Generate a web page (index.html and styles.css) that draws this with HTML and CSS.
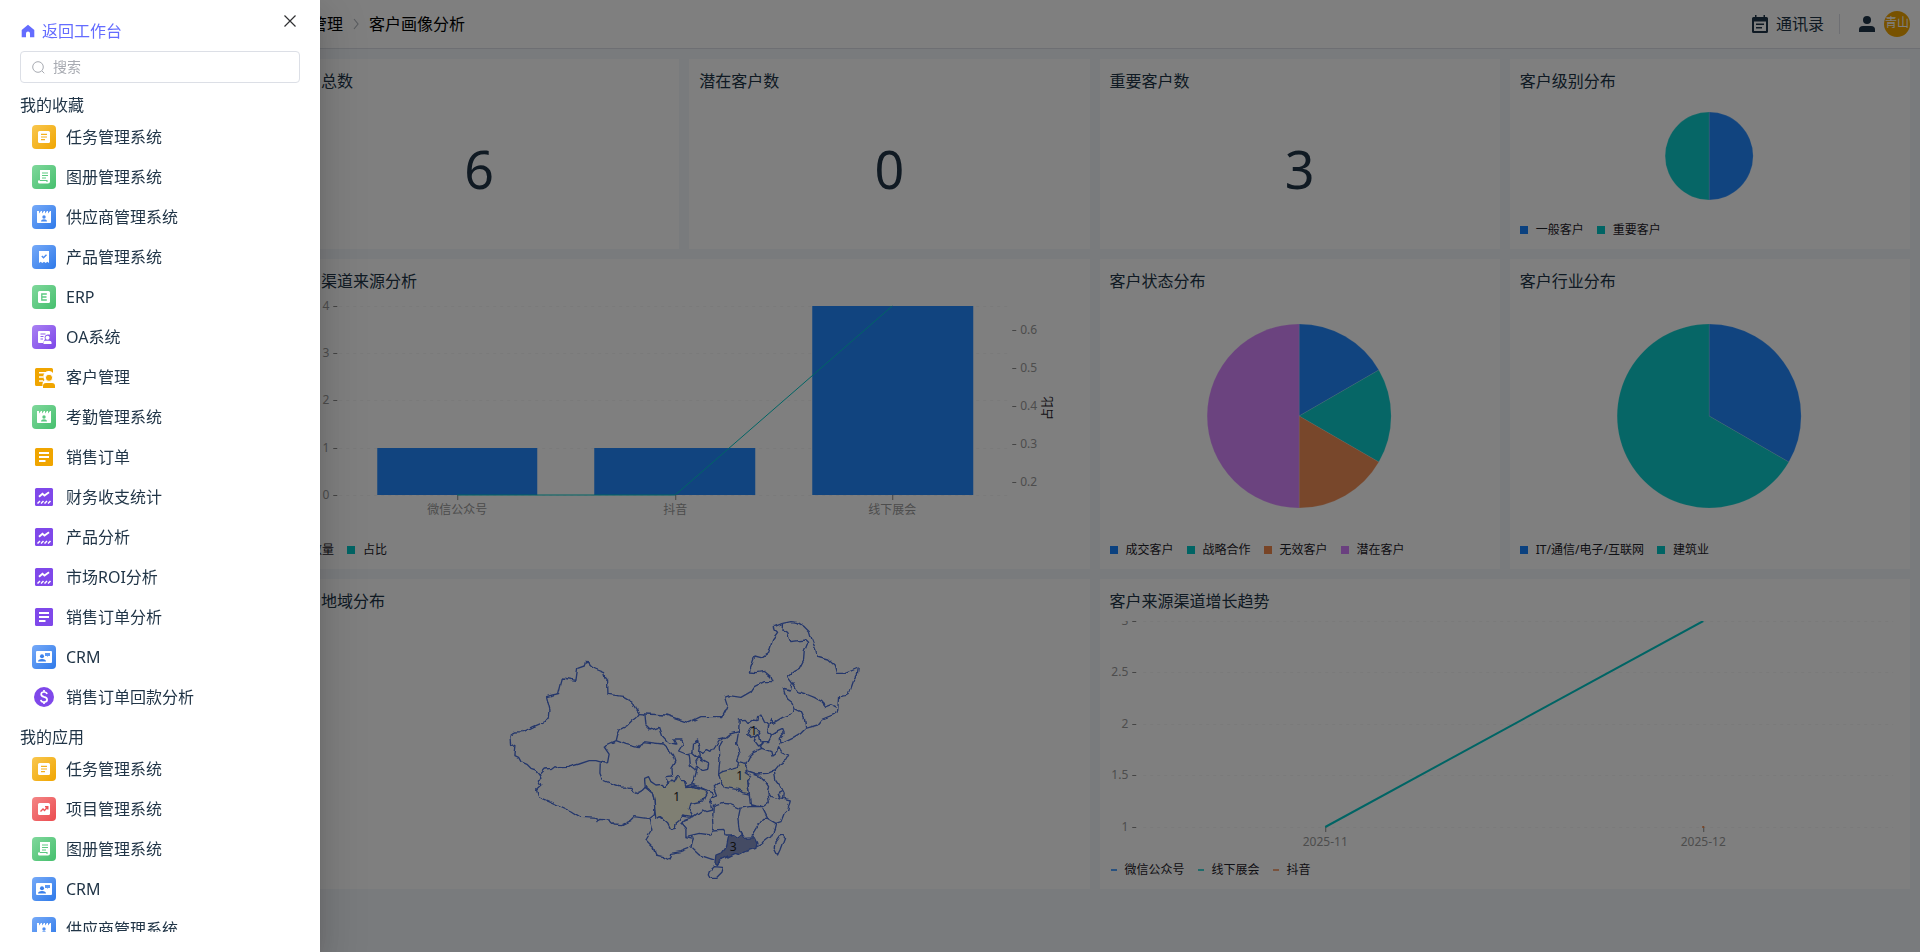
FILE: index.html
```html
<!DOCTYPE html>
<html lang="zh-CN">
<head>
<meta charset="utf-8">
<meta name="viewport" content="width=device-width, initial-scale=1">
<title>客户画像分析</title>
<link rel="stylesheet" href="styles.css">
</head>
<body>
<svg class="sprite" aria-hidden="true">
  <symbol id="i-task" viewBox="0 0 24 24"><rect x="6" y="6" width="12" height="12" rx="1.5" fill="#fff"/><path d="M9 9.3h6M9 12h6M9 14.7h4" stroke="#f3b021" stroke-width="1.2"/></symbol>
  <symbol id="i-album" viewBox="0 0 24 24"><path d="M8 5h10v11.5a2 2 0 0 1-2 2H7.500a1.500 1.500 0 0 1-1.500-1.500v-1.500h2z" fill="#fff"/><path d="M10 8h6M10 10.500h6M10 13h4M8 15.500h7v1.500" stroke="#5cc981" stroke-width="1.100" fill="none"/></symbol>
  <symbol id="i-badge" viewBox="0 0 24 24"><path d="M5 6h2v2.500L9 6h1v2.500L12 6h1v2.500L15 6h1v2.500L18 6h1v11.200a.8.8 0 0 1-.8.8H5.800a.8.8 0 0 1-.8-.8z" fill="#fff"/><circle class="cut" cx="12" cy="12" r="1.700"/><path class="cut" d="M9 16.500c0-3 6-3 6 0z"/></symbol>
  <symbol id="i-product" viewBox="0 0 24 24"><path d="M7 6h10v12l-1.700-1.300L13.700 18 12 16.700 10.300 18l-1.600-1.300L7 18z" fill="#fff"/><path d="m9.800 11 1.700 1.700 3-3" stroke="#4b8cf0" stroke-width="1.400" fill="none"/></symbol>
  <symbol id="i-erp" viewBox="0 0 24 24"><rect x="6" y="6" width="12" height="12" rx="1.500" fill="#fff"/><path d="M14.800 9H9.800v6h5M9.800 12h4.700" stroke="#5cc981" stroke-width="1.300" fill="none"/></symbol>
  <symbol id="i-oa" viewBox="0 0 24 24"><path d="M7 6h10a1 1 0 0 1 1 1v2.500h-2.500a3 3 0 0 0-2.500 4.500L11 18H7a1 1 0 0 1-1-1V7a1 1 0 0 1 1-1z" fill="#fff"/><path d="M8.500 9h5M8.500 11.500h3M8.500 14h2.500" stroke="#8f5eec" stroke-width="1.200"/><circle cx="15.500" cy="12.800" r="2" fill="#fff"/><path d="M11.500 19v-1.500q0-1.800 2-1.800h4q2 0 2 1.800V19z" fill="#fff"/></symbol>
  <symbol id="i-crm" viewBox="0 0 24 24"><rect x="4" y="6" width="16" height="12" rx="1" fill="#fff"/><circle cx="10" cy="11.200" r="2" fill="#3a80eb"/><path d="M6 16.500q0-2.500 4-2.500t4 2.500z" fill="#3a80eb"/><path d="M13 8h5v3h-2l-.5 1-.5-1h-2z" fill="#5c99f4"/></symbol>
  <symbol id="i-project" viewBox="0 0 24 24"><rect x="6" y="6" width="12" height="12" rx="1.500" fill="#fff"/><path d="m8.500 14.500 2.500-2.500 1.500 1.500 3-3.300M13 9.800h2.800v2.800" stroke="#ec5558" stroke-width="1.400" fill="none"/></symbol>
  <symbol id="i-customer" viewBox="0 0 24 24"><path d="M4.500 3h15a1.500 1.500 0 0 1 1.500 1.500V8a5 5 0 0 0-8.500 7q-2 1.300-2 3.800v2.200h-6A1.500 1.500 0 0 1 3 19.500v-15A1.500 1.500 0 0 1 4.500 3z" fill="#f0a500"/><path d="M7 7.800h9M7 12h4.500M7 16h4" stroke="#fff" stroke-width="1.500"/><circle cx="17" cy="12.800" r="3.600" fill="#f0a500" stroke="#fff" stroke-width="1"/><path d="M11 23v-2q0-3 3-3h6q3 0 3 3v2z" fill="#f0a500"/></symbol>
  <symbol id="i-order" viewBox="0 0 24 24"><rect x="3" y="3" width="18" height="18" rx="1.500" fill="currentColor"/><path d="M7 8h10M7 12h10M7 16h6.500" stroke="#fff" stroke-width="2"/></symbol>
  <symbol id="i-stat" viewBox="0 0 24 24"><rect x="3" y="3" width="18" height="18" rx="1.500" fill="currentColor"/><path d="m7 11.800 3.500-3 2 1.800L17 7.300" stroke="#fff" stroke-width="1.900" fill="none"/><path d="m5.500 18.500 2.500-2.500m1 2.500 2.500-2.500m1 2.500 2.500-2.500m1 2.500 2.500-2.500" stroke="#fff" stroke-width="1.500"/></symbol>
  <symbol id="i-money" viewBox="0 0 24 24"><circle cx="12" cy="12" r="10" fill="#7f48ea"/><path d="M15 9q-.4-2-3-2-2.800 0-2.800 2.300 0 1.900 2.800 2.600 3.100.7 3.100 2.800 0 2.300-3.100 2.300-2.800 0-3.200-2.200M12 5v2m0 10v2" stroke="#fff" stroke-width="1.700" fill="none"/></symbol>
</svg>

<div class="page">
  <header class="topbar">
    <nav class="crumbs" aria-label="面包屑">
      <a href="#">客户管理</a>
      <svg width="8" height="12" viewBox="0 0 8 12"><path d="m2 1 4 5-4 5" fill="none" stroke="#b4b8bf" stroke-width="1.200"/></svg>
      <span>客户画像分析</span>
    </nav>
    <div class="tools">
      <a class="contacts" href="#">
        <svg width="18" height="20" viewBox="0 0 18 20"><path d="M4 1h1.500v2h7V1H14v2h1.500A1.500 1.500 0 0 1 17 4.500v13a1.500 1.500 0 0 1-1.500 1.500h-13A1.500 1.500 0 0 1 1 17.500v-13A1.500 1.500 0 0 1 2.500 3H4z" fill="#1e3448"/><path d="M3 7.500h12V17H3z" fill="#fff"/><path d="M5 10.300h8M5 13.800h6" stroke="#1e3448" stroke-width="1.500"/></svg>
        通讯录
      </a>
      <span class="divider"></span>
      <button class="user" type="button" aria-label="用户"><svg width="16" height="16" viewBox="0 0 16 16"><circle cx="8" cy="4" r="4" fill="#1e3448"/><path d="M0 16v-2.500Q0 10 4 10h8q4 0 4 3.500V16z" fill="#1e3448"/></svg></button>
      <span class="avatar">青山</span>
    </div>
  </header>

  <main class="board">
    <section class="card"><h2>客户总数</h2><p class="stat">6</p></section>
    <section class="card"><h2>潜在客户数</h2><p class="stat">0</p></section>
    <section class="card"><h2>重要客户数</h2><p class="stat">3</p></section>
    <section class="card">
      <h2>客户级别分布</h2>
      <svg class="chart short" viewBox="0 0 380 110">
        <g class="pie"><path class="blue" d="M189 55V11a44 44 0 0 1 0 88z"/><path class="teal" d="M189 55v44a44 44 0 0 1 0-88z"/></g>
      </svg>
      <ul class="legend"><li class="blue">一般客户</li><li class="teal">重要客户</li></ul>
    </section>

    <section class="card wide">
      <h2>客户渠道来源分析</h2>
      <svg class="chart" viewBox="0 0 790 230">
        <path class="grid" d="M50 5.500h670M50 52.500h670M50 99.500h670M50 147.500h670M50 194.500h670"/>
        <path class="blue" d="M88 147h160v47H88zM305 147h161v47H305zM523 5h161v189H523z"/>
        <path class="tick" d="M44 5.500h4M44 52.500h4M44 99.500h4M44 147.500h4M44 194.500h4M723 29.500h4M723 67.500h4M723 105.500h4M723 143.500h4M723 181.500h4M168.500 194v5M386.500 194v5M603.500 194v5"/>
        <path class="line thin" d="M168 194H386L603 5"/>
        <g class="axis end"><text x="40" y="9">4</text><text x="40" y="56">3</text><text x="40" y="103">2</text><text x="40" y="151">1</text><text x="40" y="198">0</text></g>
        <g class="axis"><text x="731" y="33">0.6</text><text x="731" y="71">0.5</text><text x="731" y="109">0.4</text><text x="731" y="147">0.3</text><text x="731" y="185">0.2</text></g>
        <g class="axis mid"><text x="168" y="213">微信公众号</text><text x="386" y="213">抖音</text><text x="603" y="213">线下展会</text></g>
        <text class="name" transform="translate(763 107) rotate(-90)">占比</text>
      </svg>
      <ul class="legend inset"><li class="blue">数量</li><li class="teal">占比</li></ul>
    </section>
    <section class="card">
      <h2>客户状态分布</h2>
      <svg class="chart" viewBox="0 0 380 230">
        <g class="pie"><path class="blue" d="M189 115V23a92 92 0 0 1 79.700 46z"/><path class="teal" d="M189 115l79.700-46a92 92 0 0 1 0 92z"/><path class="orange" d="M189 115l79.700 46a92 92 0 0 1-79.700 46z"/><path class="purple" d="M189 115v92a92 92 0 0 1 0-184z"/></g>
      </svg>
      <ul class="legend"><li class="blue">成交客户</li><li class="teal">战略合作</li><li class="orange">无效客户</li><li class="purple">潜在客户</li></ul>
    </section>
    <section class="card">
      <h2>客户行业分布</h2>
      <svg class="chart" viewBox="0 0 380 230">
        <g class="pie"><path class="blue" d="M189 115V23a92 92 0 0 1 79.700 138z"/><path class="teal" d="M189 115l79.700 46A92 92 0 1 1 189 23z"/></g>
      </svg>
      <ul class="legend"><li class="blue">IT/通信/电子/互联网</li><li class="teal">建筑业</li></ul>
    </section>

    <section class="card wide">
      <h2>客户地域分布</h2>
      <svg class="chart map" viewBox="0 63 1170 774">
        <defs><filter id="coast" filterUnits="userSpaceOnUse" x="0" y="40" width="1170" height="820" color-interpolation-filters="sRGB"><feTurbulence type="fractalNoise" baseFrequency="0.045" numOctaves="1" seed="4"/><feDisplacementMap in="SourceGraphic" scale="16" xChannelSelector="R" yChannelSelector="G"/></filter></defs>
        <g class="borders" filter="url(#coast)">
          <path d="M288 184L300 185 302 196 315 207 343 218 347 232 355 240 356 283 403 289 430 305 440 325 450 341 443 350 430 360 412 378 393 388 385 405 381 422 345 438 360 460 355 488 345 489 320 482 300 482 270 492 235 502 213 503 200 497 190 505 165 507 150 523 140 510 125 505 113 493 95 485 88 472 77 467 80 440 64 433 62 408 78 396 100 395 130 380 165 365 170 358 180 352 182 330 177 310 172 290 190 285 208 281 213 260 220 234 260 241 265 205 285 198Z"/>
          <path d="M150 523L155 535 147 540 155 555 142 567 148 590 195 610 245 633 275 652 320 655 323 668 328 655 360 657 375 672 400 674 425 662 437 650 480 656 495 645 497 632 495 600 490 580 468 562 455 575 445 581 430 573 425 562 395 561 365 550 340 540 332 520 333 490"/>
          <path d="M381 422L410 433 447 443 460 425 485 428 520 432 540 450 553 465 560 485 548 505 550 528 527 530 537 553"/>
          <path d="M450 341L467 342 470 375 485 390 508 382 517 408 535 428 560 432 553 420 578 420 582 430 568 453 590 462 600 465 603 495 622 510 615 535 608 552 590 560"/>
          <path d="M467 342L530 345 597 368 635 350 700 350 715 320 706 292 720 287 755 292 785 275 795 260 825 245 851 245 845 230 825 214 800 218 780 216 797 168 815 173 838 158 850 120 865 100 857 92 855 80 880 70"/>
          <path d="M590 462L608 458 610 430 625 420 630 440 628 452 640 460 655 452 665 457 690 420 703 417 722 402 748 395"/>
          <path d="M608 458L622 470 640 480 658 490 655 508 640 512 625 498 620 485 630 470 628 452M622 510L625 498"/>
          <path d="M880 70L905 65 925 67 945 80 960 95 967 118 980 150 983 168 1015 177 1035 195 1042 220 1068 220 1107 204 1105 220 1092 245 1080 280 1068 287 1048 290 1045 335 1035 343 1000 357 985 375 950 385 935 400 910 415 890 425 872 432 870 415 885 400 880 388 865 395 848 405 835 395 838 378"/>
          <path d="M880 70L878 90 895 100 905 125 945 120 955 130 945 155 943 180 930 205 912 215 895 230 910 250 903 270 885 265 895 300 908 310 915 325 912 340 880 352 850 370 848 355 838 378"/>
          <path d="M910 250L915 258 925 275 950 282 975 292 998 305 1010 320 1025 314 1040 322M915 325L935 335 945 355 950 385"/>
          <path d="M703 417L690 440 692 480 688 522M748 395L742 430 750 460 742 480 748 485"/>
          <path d="M748 395L750 360 765 358 775 370 790 360 803 362 805 350 815 345 825 365 838 378M848 405L838 425 820 425 810 440 818 445 795 455 780 470 770 490"/>
          <path class="low" d="M775 405L785 385 800 385 812 400 800 410 785 415Z"/>
          <path d="M800 410L810 405 818 430 805 438 795 425Z"/>
          <path d="M818 445L845 455 848 468 862 458 868 440 877 455 898 465 890 480 870 493 855 512 835 520 800 522 765 510"/>
          <path d="M855 512L860 540 875 560 885 580 883 598 865 595 845 590 835 575 838 560 828 545 812 530 790 522M880 575L870 580 875 595"/>
          <path d="M785 530L777 560 780 582 783 610 800 615 820 620 840 605 835 575M885 595L903 600 895 630 885 640 875 665 860 670 835 655 820 625"/>
          <path d="M860 670L855 690 845 710 820 730 803 740M835 655L820 655 800 685 785 710"/>
          <path d="M820 620L780 620 750 625 745 650 750 690 755 703M750 625L720 612 700 610 672 620 670 660 672 690 700 688 710 705 735 705"/>
          <path d="M690 548L675 560 685 585 660 595 670 615M655 572L675 580 660 600 668 630 650 635 640 630 612 650 585 660 575 672 590 690 590 710 630 700 665 705 672 690M608 552L640 565 655 572"/>
          <path d="M590 710L612 715 605 742 630 765 660 775 675 780M480 656L488 690 470 720 490 740 500 765 520 770 540 780 545 760 575 755 600 745"/>
          <path class="low" d="M468 562L466 535 478 530 485 545 500 555 520 553 525 562 548 540 555 545 565 527 575 545 585 545 590 560 610 558 655 572 645 590 640 603 605 610 600 628 612 650 580 645 572 660 560 670 558 685 545 688 535 668 520 655 513 650 500 658 497 632 495 600 490 580Z"/>
          <path class="low" d="M688 522L700 515 745 503 748 485 770 490 775 505 765 515 780 525 785 535 775 545 777 560 780 582 760 578 745 568 705 562 695 545Z"/>
          <path class="high" d="M712 740L718 710 735 705 745 712 757 703 765 715 795 713 803 730 800 745 770 755 750 765 735 760 705 775 690 780 685 797 677 790 680 765 700 757Z"/>
          <path d="M660 815L675 800 700 802 695 820 680 835 663 835 657 825ZM880 705L886 712 872 750 865 765 855 745 858 725 870 708Z"/>
        </g>
        <g class="counts"><text x="793" y="405">1</text><text x="751" y="539">1</text><text x="562" y="603">1</text><text x="732" y="752">3</text></g>
      </svg>
    </section>
    <section class="card wide">
      <h2>客户来源渠道增长趋势</h2>
      <svg class="chart" viewBox="0 0 790 230">
        <path class="grid" d="M33 .5h750M33 51.500h750M33 103.500h750M33 154.500h750M33 206.500h750"/>
        <path class="tick" d="M22 .5h4M22 51.500h4M22 103.500h4M22 154.500h4M22 206.500h4M215.500 206v5M593.500 206v5"/>
        <path class="line" d="M215 206L593 0"/>
        <path class="orange" d="M592 205h2v2h-2z"/>
        <g class="axis end"><text x="18" y="4">3</text><text x="18" y="55">2.5</text><text x="18" y="107">2</text><text x="18" y="158">1.5</text><text x="18" y="210">1</text></g>
        <g class="axis mid"><text x="215" y="225">2025-11</text><text x="593" y="225">2025-12</text></g>
      </svg>
      <ul class="legend dashes"><li class="blue">微信公众号</li><li class="teal">线下展会</li><li class="orange">抖音</li></ul>
    </section>
  </main>
</div>

<div class="mask"></div>
<aside class="drawer" aria-label="应用菜单">
  <button class="close" type="button" aria-label="关闭"><svg width="12" height="12" viewBox="0 0 12 12"><path d="m.5.5 11 11m0-11-11 11" stroke="#303133" stroke-width="1.200"/></svg></button>
  <a class="home" href="#"><svg width="14" height="14" viewBox="0 0 14 14"><path d="M7 .8 13.300 6v7.200H9V9.500a2 2 0 0 0-4 0v3.700H.7V6z" fill="#646cff"/></svg>返回工作台</a>
  <label class="search">
    <svg width="13" height="13" viewBox="0 0 13 13"><circle cx="6" cy="6" r="5.300" fill="none" stroke="#a8abb2"/><path d="m10 10 2.300 2.300" stroke="#a8abb2"/></svg>
    <input type="search" placeholder="搜索" aria-label="搜索">
  </label>
  <div class="lists">
    <h3>我的收藏</h3>
    <ul class="apps">
      <li><a href="#"><svg class="ico yellow"><use href="#i-task"/></svg>任务管理系统</a></li>
      <li><a href="#"><svg class="ico green"><use href="#i-album"/></svg>图册管理系统</a></li>
      <li><a href="#"><svg class="ico azure"><use href="#i-badge"/></svg>供应商管理系统</a></li>
      <li><a href="#"><svg class="ico azure"><use href="#i-product"/></svg>产品管理系统</a></li>
      <li><a href="#"><svg class="ico green"><use href="#i-erp"/></svg>ERP</a></li>
      <li><a href="#"><svg class="ico violet"><use href="#i-oa"/></svg>OA系统</a></li>
      <li><a href="#"><svg class="ico"><use href="#i-customer"/></svg>客户管理</a></li>
      <li><a href="#"><svg class="ico green"><use href="#i-badge"/></svg>考勤管理系统</a></li>
      <li><a href="#"><svg class="ico plain-amber"><use href="#i-order"/></svg>销售订单</a></li>
      <li><a href="#"><svg class="ico plain-violet"><use href="#i-stat"/></svg>财务收支统计</a></li>
      <li><a href="#"><svg class="ico plain-violet"><use href="#i-stat"/></svg>产品分析</a></li>
      <li><a href="#"><svg class="ico plain-violet"><use href="#i-stat"/></svg>市场ROI分析</a></li>
      <li><a href="#"><svg class="ico plain-violet"><use href="#i-order"/></svg>销售订单分析</a></li>
      <li><a href="#"><svg class="ico azure"><use href="#i-crm"/></svg>CRM</a></li>
      <li><a href="#"><svg class="ico"><use href="#i-money"/></svg>销售订单回款分析</a></li>
    </ul>
    <h3>我的应用</h3>
    <ul class="apps">
      <li><a href="#"><svg class="ico yellow"><use href="#i-task"/></svg>任务管理系统</a></li>
      <li><a href="#"><svg class="ico red"><use href="#i-project"/></svg>项目管理系统</a></li>
      <li><a href="#"><svg class="ico green"><use href="#i-album"/></svg>图册管理系统</a></li>
      <li><a href="#"><svg class="ico azure"><use href="#i-crm"/></svg>CRM</a></li>
      <li><a href="#"><svg class="ico azure"><use href="#i-badge"/></svg>供应商管理系统</a></li>
    </ul>
  </div>
</aside>
</body>
</html>
```
FILE: styles.css
```css
* { box-sizing: border-box; }
body {
  margin: 0;
  background: #f3f6fa;
  color: #213547;
  font: 16px/24px "Noto Sans", "Noto Sans CJK SC", sans-serif;
}
h2, h3, p, ul { margin: 0; padding: 0; font-size: 16px; font-weight: 400; }
ul { list-style: none; }
a { color: inherit; text-decoration: none; }
button { border: 0; padding: 0; background: none; cursor: pointer; }
svg { display: block; flex: none; }
.sprite { display: none; }

.page { min-height: 100vh; padding-left: 269px; }
.topbar {
  display: flex;
  justify-content: space-between;
  align-items: center;
  height: 49px;
  margin-left: -269px;
  padding: 0 10px 0 279px;
  background: #fff;
  border-bottom: 1px solid #dcdfe6;
}
.crumbs { display: flex; align-items: center; gap: 9px; color: #000; }
.tools { display: flex; align-items: center; }
.contacts { display: flex; align-items: center; gap: 7px; }
.divider { width: 1px; height: 20px; margin: 0 19px 0 15px; background: #dcdfe6; }
.avatar {
  width: 26px;
  height: 26px;
  margin-left: 9px;
  border-radius: 50%;
  background: #f0a500;
  color: #fff;
  font-size: 12px;
  line-height: 24px;
  text-align: center;
}

.board {
  display: grid;
  grid-template-columns: repeat(4, minmax(0, 1fr));
  grid-template-rows: minmax(190px, auto) minmax(310px, auto) minmax(310px, auto);
  gap: 10px;
  padding: 10px;
}
.card { display: flex; flex-direction: column; padding: 10px; background: #fff; }
.card h2 { margin-bottom: 8px; }
.wide { grid-column: span 2; }
.stat {
  display: flex;
  flex: 1;
  align-items: center;
  justify-content: center;
  padding-bottom: 2px;
  font-size: 52px;
  line-height: 60px;
}
.chart { flex: none; width: 100%; height: 230px; overflow: hidden; }
.short { height: 110px; }
.map { height: 258px; }

.blue { fill: #1783ff; color: #1783ff; }
.teal { fill: #00c9c9; color: #00c9c9; }
.orange { fill: #f0884d; color: #f0884d; }
.purple { fill: #d580ff; color: #d580ff; }
.chart .blue, .chart .teal, .chart .purple, .chart .orange { fill-opacity: .95; }
.pie path { stroke: #fff; stroke-opacity: .15; stroke-width: 1; }
.grid { stroke: #f5f5f5; stroke-dasharray: 3 4; }
.tick { stroke: #8a8a8a; }
.line { fill: none; stroke: #00c9c9; stroke-width: 2; }
.thin { stroke-width: 1; }
.axis { fill: #9a9a9a; font-size: 12px; }
.end { text-anchor: end; }
.mid, .name, .counts { text-anchor: middle; }
.name { fill: #1d2129; font-size: 12px; }
.borders { fill: none; stroke: #4a6fd8; stroke-width: 4; stroke-linejoin: round; }
.low { fill: #fffee6; }
.high { fill: #8896c8; }
.counts { fill: #222; font-size: 36px; }

.legend { display: flex; gap: 13px; padding-top: 10px; font-size: 12px; line-height: 18px; }
.legend li { display: flex; align-items: center; gap: 8px; color: #1d2129; }
.legend li::before { content: ""; width: 8px; height: 8px; background: #1783ff; }
.legend .teal::before { background: #00c9c9; }
.legend .orange::before { background: #f0884d; }
.legend .purple::before { background: #d580ff; }
.legend.dashes { gap: 12px; }
.dashes li::before { width: 6px; height: 2px; margin-left: 1px; opacity: .75; }
.inset { padding-left: 5px; }

.mask { position: fixed; inset: 0; background: rgba(0, 0, 0, .5); }
.drawer {
  position: fixed;
  top: 0;
  bottom: 0;
  left: 0;
  display: flex;
  flex-direction: column;
  width: 320px;
  padding: 19px 20px 20px;
  background: #fff;
  box-shadow: 0 16px 48px 16px rgba(0, 0, 0, .08), 0 12px 32px rgba(0, 0, 0, .12), 0 8px 16px -8px rgba(0, 0, 0, .16);
}
.close { position: absolute; top: 15px; right: 24px; }
.home { display: flex; align-items: center; gap: 7px; align-self: flex-start; padding-left: 1px; color: #646cff; }
.search {
  display: flex;
  align-items: center;
  gap: 8px;
  height: 32px;
  margin: 8px 0 10px;
  padding: 0 11px;
  border: 1px solid #dcdfe6;
  border-radius: 4px;
}
.search input {
  flex: 1;
  min-width: 0;
  padding: 0;
  border: 0;
  outline: 0;
  background: none;
  font: inherit;
  font-size: 14px;
}
.search input::placeholder { color: #a8abb2; }
.lists { flex: 1; min-height: 0; overflow: auto; scrollbar-width: none; }
.apps { margin-bottom: 8px; padding-left: 12px; }
.apps a { display: flex; align-items: center; gap: 10px; height: 40px; }
.ico { width: 24px; height: 24px; border-radius: 4px; }
.yellow { background: linear-gradient(135deg, #f9c74f, #f0a500); }
.green { background: linear-gradient(135deg, #80d89c, #45bf6d); fill: #5cc981; }
.azure { background: linear-gradient(135deg, #76aaf8, #2e79e9); fill: #4b8cf0; }
.violet { background: linear-gradient(135deg, #aa82f3, #7c45e8); }
.red { background: linear-gradient(135deg, #f48686, #eb4b4f); }
.plain-amber { color: #f0a500; }
.plain-violet { color: #7f48ea; }
```
